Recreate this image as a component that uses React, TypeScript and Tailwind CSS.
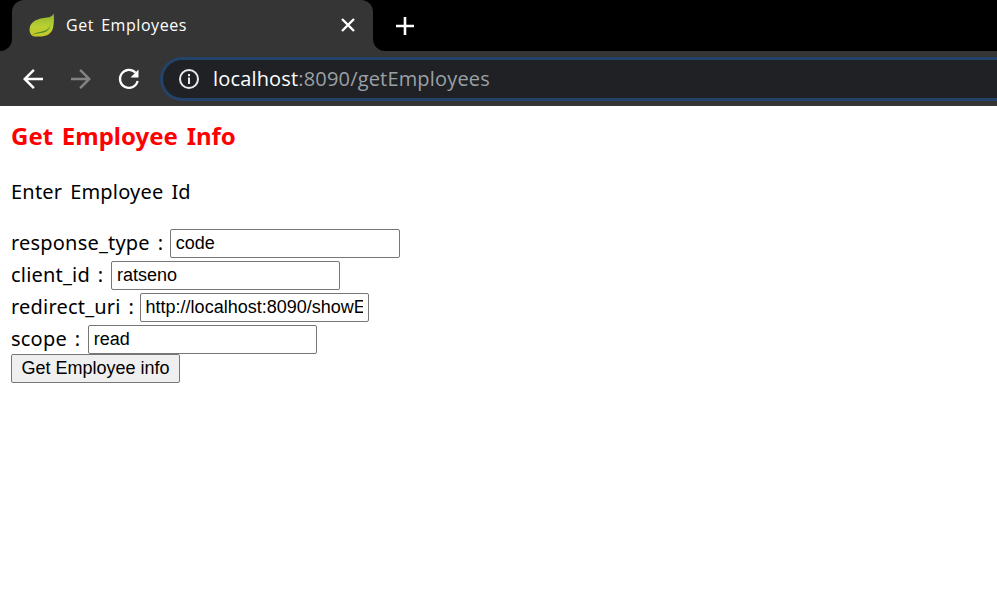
function SpringLeaf() {
  return (
    <svg width="26" height="24" viewBox="0 0 26 24" className="shrink-0">
      <defs>
        <linearGradient id="leaf" x1="0" y1="0" x2="0" y2="1">
          <stop offset="0" stopColor="#8fb52e" />
          <stop offset="0.55" stopColor="#b9cf33" />
          <stop offset="1" stopColor="#c9c52a" />
        </linearGradient>
      </defs>
      <path d="M24.5 0.5 C23.5 3 21.5 4.2 18 4.6 C9 5.6 1.5 8 0.6 15.5 C0.3 18 1 20.6 2.6 22.2 C4 23.4 6 23.6 10 23.6 C17.5 23.6 23 21 24.2 14 C25 9.5 25.4 4.5 24.5 0.5 Z" fill="url(#leaf)" />
      <path d="M3 22.2 C7 18.4 13 19.6 17.4 17 C19.8 15.6 21.2 13.4 22.2 11 C21 15.6 18.4 18.4 14.6 19.6 C10.5 20.8 6.5 20 3 22.2 Z" fill="#3f8a2c" />
    </svg>
  );
}

function Field({ label, value, width, gap }: { label: string; value: string; width: string; gap: string }) {
  return (
    <div className="flex h-[32px] items-start">
      <label className={`${gap} leading-[28px] tracking-[0.2px] [word-spacing:2.5px]`}>{label}</label>
      <input
        type="text"
        readOnly
        value={value}
        className={`h-[29px] ${width} rounded-[2px] border border-[#767676] bg-white px-[5px] font-['Liberation_Sans',sans-serif] text-[18px] text-black outline-none`}
      />
    </div>
  );
}

export default function App() {
  return (
    <div className="min-h-[613px] overflow-hidden bg-white font-['Noto_Sans',sans-serif]">
      {/* browser tab strip */}
      <div className="flex h-[51px] items-center bg-black">
        <div className="relative ml-[12px] flex h-[51px] w-[361px] items-center rounded-t-[12px] bg-[#353535] pb-[2px] pl-[17px] pr-[15px]">
          <div className="absolute bottom-0 left-[-12px] h-[12px] w-[12px] bg-[#353535]">
            <div className="h-full w-full rounded-br-[12px] bg-black" />
          </div>
          <div className="absolute bottom-0 right-[-12px] h-[12px] w-[12px] bg-[#353535]">
            <div className="h-full w-full rounded-bl-[12px] bg-black" />
          </div>
          <SpringLeaf />
          <span className="ml-[11px] flex-1 font-['Open_Sans',sans-serif] text-[16px] tracking-[0.55px] text-white [word-spacing:2.5px]">
            Get Employees
          </span>
          <svg width="20" height="20" viewBox="0 0 20 20" className="text-white">
            <path d="M4 4 L16 16 M16 4 L4 16" stroke="currentColor" strokeWidth="2.4" fill="none" />
          </svg>
        </div>
        <svg width="24" height="24" viewBox="0 0 24 24" className="ml-[20px] text-white">
          <path d="M12 3 V21 M3 12 H21" stroke="currentColor" strokeWidth="2.6" fill="none" />
        </svg>
      </div>

      {/* toolbar */}
      <div className="flex h-[55px] items-center bg-[#353535]">
        <svg width="30" height="30" viewBox="0 0 24 24" className="ml-[18px] text-white">
          <path fill="currentColor" d="M20 11H7.83l5.59-5.59L12 4l-8 8 8 8 1.41-1.41L7.83 13H20v-2z" />
        </svg>
        <svg width="30" height="30" viewBox="0 0 24 24" className="ml-[18px] rotate-180 text-[#838383]">
          <path fill="currentColor" d="M20 11H7.83l5.59-5.59L12 4l-8 8 8 8 1.41-1.41L7.83 13H20v-2z" />
        </svg>
        <svg width="24" height="24" viewBox="0 0 24 24" className="ml-[21px] text-white">
          <path d="M18.6 5.8 A9 9 0 1 0 20.7 14" fill="none" stroke="currentColor" strokeWidth="2.2" />
          <path d="M21.5 2.5 V10.5 H13.5 Z" fill="currentColor" />
        </svg>
        <div className="ml-[19px] flex h-[44px] flex-1 items-center rounded-l-full border-[3px] border-r-0 border-[#23436b] bg-[#202124] pl-[15px]">
          <svg width="22" height="22" viewBox="0 0 22 22" className="shrink-0">
            <circle cx="11" cy="11" r="9" fill="none" stroke="#e8eaed" strokeWidth="2" />
            <rect x="10" y="9.5" width="2" height="6.5" fill="#e8eaed" />
            <rect x="10" y="6" width="2" height="2.2" fill="#e8eaed" />
          </svg>
          <span className="ml-[13px] font-['Open_Sans',sans-serif] text-[20px] tracking-[0.17px] text-[#9aa0a6]">
            <span className="text-white">localhost</span>:8090/getEmployees
          </span>
        </div>
      </div>

      {/* page */}
      <div className="pl-[11px] text-[20px] text-black">
        <h3 className="mt-[13px] text-[24px] leading-[34px] font-bold text-[#ff0000] [word-spacing:2.5px]">
          Get Employee Info
        </h3>
        <p className="mt-[25px] leading-[28px] tracking-[0.2px] [word-spacing:2.5px]">Enter Employee Id</p>
        <form className="mt-[23px]">
          <Field label="response_type :" value="code" width="w-[230px]" gap="mr-[6.5px]" />
          <Field label="client_id :" value="ratseno" width="w-[229px]" gap="mr-[7.5px]" />
          <Field label="redirect_uri :" value="http://localhost:8090/showEmployees" width="w-[229px]" gap="mr-[5.5px]" />
          <Field label="scope :" value="read" width="w-[229px]" gap="mr-[7.5px]" />
          <button
            type="button"
            className="mt-[-3px] block h-[29px] w-[169px] rounded-[2px] border border-[#767676] bg-[#efefef] font-['Liberation_Sans',sans-serif] text-[18px] text-black"
          >
            Get Employee info
          </button>
        </form>
      </div>
    </div>
  );
}
